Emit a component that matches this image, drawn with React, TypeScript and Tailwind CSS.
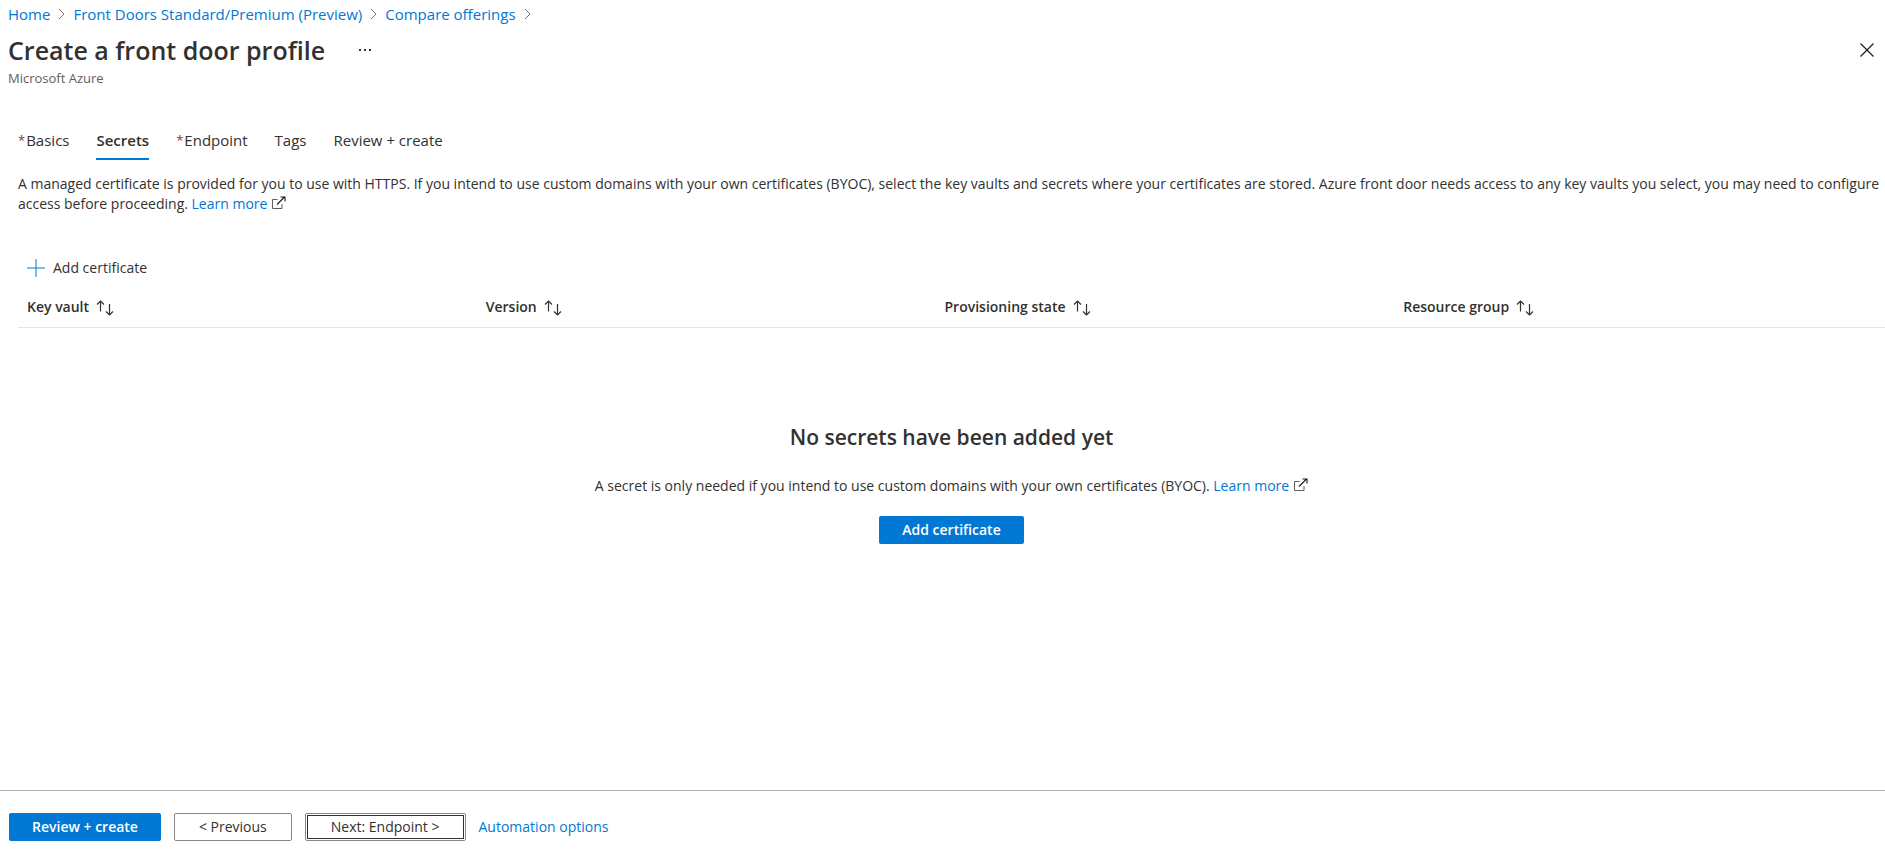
import React from "react";

const columns = ["Key vault", "Version", "Provisioning state", "Resource group"];

const tabs = [
  { label: "Basics", required: true },
  { label: "Secrets", active: true },
  { label: "Endpoint", required: true },
  { label: "Tags" },
  { label: "Review + create" },
];

const crumbs = ["Home", "Front Doors Standard/Premium (Preview)", "Compare offerings"];

function Chevron() {
  return (
    <svg className="h-3 w-[7px]" viewBox="0 0 7 12" fill="none" stroke="#7a7a7a" aria-hidden="true">
      <path d="M1 1l5 5-5 5" />
    </svg>
  );
}

function ExternalIcon() {
  return (
    <svg className="ml-1 inline-block h-[14px] w-[15px] align-[-1px]" viewBox="0 0 15 14" fill="none" aria-hidden="true">
      <path d="M6.5 3.5h-5v9h9.500V8" stroke="#605e5c" />
      <path d="M6 8.500l7.500-7.500M9.500 1h4.500v4.500" stroke="#1b1a19" strokeWidth="1.1" />
    </svg>
  );
}

function SortIcon() {
  return (
    <svg className="h-4 w-[18px] translate-y-px" viewBox="0 0 18 16" fill="none" stroke="#323130" strokeWidth="1.2" aria-hidden="true">
      <path d="M4.500 11.500V1M1 4.500L4.500 1L8 4.500" />
      <path d="M13.500 4v11M10 11.500l3.500 3.500L17 11.500" />
    </svg>
  );
}

function LearnMore() {
  return (
    <a href="#learn" className="text-[#0078d4]">
      Learn more
      <ExternalIcon />
    </a>
  );
}

export default function App() {
  return (
    <div className="flex min-h-screen flex-col bg-white font-['Open_Sans','Noto_Sans',sans-serif] text-[14px] leading-5 text-[#323130]">
      <header className="px-2 pt-[3px]">
        <nav aria-label="Breadcrumb" className="flex items-center gap-2 text-[15px] leading-[22px]">
          {crumbs.map((crumb) => (
            <React.Fragment key={crumb}>
              <a href="#crumb" className="text-[#0078d4]">
                {crumb}
              </a>
              <Chevron />
            </React.Fragment>
          ))}
        </nav>
        <div className="mt-[9px] flex items-center">
          <h1 className="text-[25px] leading-8 font-semibold">Create a front door profile</h1>
          <button type="button" aria-label="More" className="ml-[30px] flex h-6 w-5 items-center justify-center">
            <svg className="h-1 w-[14px]" viewBox="0 0 14 4" fill="#323130" aria-hidden="true">
              <path d="M1 1h2v2H1zM6 1h2v2H6zM11 1h2v2h-2z" />
            </svg>
          </button>
          <button type="button" aria-label="Close" className="ml-auto flex h-6 w-5 items-center justify-center">
            <svg className="h-[14px] w-[14px]" viewBox="0 0 14 14" stroke="#1b1a19" strokeWidth="1.2" aria-hidden="true">
              <path d="M.5.500l13 13M13.500.500l-13 13" />
            </svg>
          </button>
        </div>
        <p className="mt-1 text-[13px] leading-4 text-[#605e5c]">Microsoft Azure</p>
      </header>

      <main className="flex-1 pt-10 pl-[18px]">
        <div role="tablist" className="flex gap-[27px] text-[15px]">
          {tabs.map((tab) => (
            <button
              key={tab.label}
              type="button"
              role="tab"
              aria-selected={!!tab.active}
              className={
                tab.active
                  ? "border-b-2 border-[#0078d4] pt-1 pb-2 font-semibold"
                  : "flex items-center border-b-2 border-transparent pt-1 pb-2"
              }
            >
              {tab.required && <span className="mr-px text-[13px] text-[#a4262c]">*</span>}
              {tab.label}
            </button>
          ))}
        </div>

        <p className="mt-[14px]">
          A managed certificate is provided for you to use with HTTPS. If you intend to use custom domains with your own
          certificates (BYOC), select the key vaults and secrets where your certificates are stored. Azure front door
          needs access to any key vaults you select, you may need to configure access before proceeding. <LearnMore />
        </p>

        <button type="button" className="mt-11 ml-[9px] flex items-center gap-2">
          <svg className="h-[18px] w-[18px]" viewBox="0 0 18 18" stroke="#0078d4" aria-hidden="true">
            <path d="M9 0v18M0 9h18" />
          </svg>
          Add certificate
        </button>

        <table className="mt-[19px] w-full table-fixed border-b border-[#e5e5e5]">
          <thead>
            <tr>
              {columns.map((column) => (
                <th key={column} scope="col" className="pb-[10px] pl-[9px] text-left font-semibold">
                  <button type="button" className="flex items-center gap-[7px]">
                    {column}
                    <SortIcon />
                  </button>
                </th>
              ))}
              <td className="w-8" />
            </tr>
          </thead>
        </table>

        <section className="mt-[95px] flex flex-col items-center">
          <h2 className="text-[21px] leading-7 font-semibold">No secrets have been added yet</h2>
          <p className="mt-[25px]">
            A secret is only needed if you intend to use custom domains with your own certificates (BYOC).{" "}
            <LearnMore />
          </p>
          <button type="button" className="mt-5 h-7 rounded-[2px] bg-[#0078d4] px-[23px] font-semibold text-white">
            Add certificate
          </button>
        </section>
      </main>

      <footer className="flex items-center gap-[13px] border-t border-[#b3b0ad] px-[9px] pt-[22px] pb-[9px]">
        <button type="button" className="h-7 rounded-[2px] bg-[#0078d4] px-[23px] font-semibold text-white">
          Review + create
        </button>
        <button type="button" className="h-7 rounded-[2px] border border-[#8a8886] px-6 leading-none">
          &lt; Previous
        </button>
        <button type="button" className="h-7 rounded-[2px] border border-[#8a8886] p-px leading-none">
          <span className="flex h-6 items-center border border-[#323130] px-[23px]">Next: Endpoint &gt;</span>
        </button>
        <a href="#automation" className="text-[#0078d4]">
          Automation options
        </a>
      </footer>
    </div>
  );
}
